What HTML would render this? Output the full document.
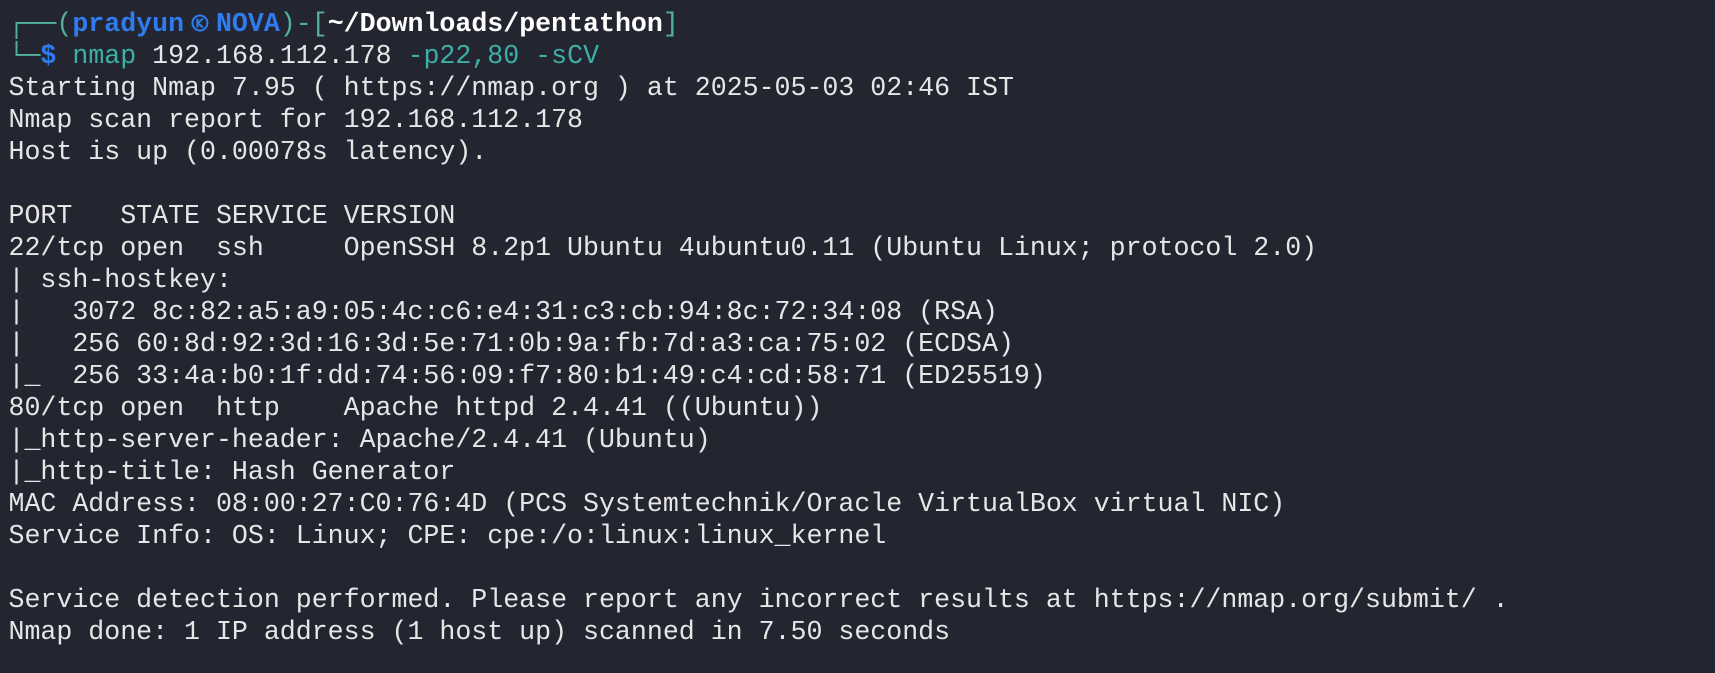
<!DOCTYPE html>
<html><head><meta charset="utf-8"><style>
html,body{margin:0;padding:0;background:#232530;width:1715px;height:673px;overflow:hidden}
pre{margin:0;position:absolute;left:8.5px;top:8px;font-family:"Liberation Mono","DejaVu Sans Mono",monospace;font-size:26.6px;line-height:32px;color:#e6e6e6}
.t{color:#4fb39c}.b{color:#2f7cf0;font-weight:bold}.w{color:#fff;font-weight:bold}.c{color:#3db0a6}
.k{display:inline-block;width:31.9px;height:22px;vertical-align:-3px}
</style></head><body>
<pre><span class="t">┌──(</span><span class="b">pradyun</span><svg class="k" viewBox="0 0 32 22"><circle cx="16" cy="11" r="7.5" fill="none" stroke="#2f7cf0" stroke-width="2"/><path d="M13.5 6.5V15.5M19 6.5L14 11L19 15.5" fill="none" stroke="#2f7cf0" stroke-width="2"/></svg><span class="b">NOVA</span><span class="t">)-[</span><span class="w">~/Downloads/pentathon</span><span class="t">]</span>
<span class="t">└─</span><span class="b">$</span> <span class="c">nmap</span> 192.168.112.178 <span class="c">-p22,80 -sCV</span>
Starting Nmap 7.95 ( https://nmap.org ) at 2025-05-03 02:46 IST
Nmap scan report for 192.168.112.178
Host is up (0.00078s latency).

PORT   STATE SERVICE VERSION
22/tcp open  ssh     OpenSSH 8.2p1 Ubuntu 4ubuntu0.11 (Ubuntu Linux; protocol 2.0)
| ssh-hostkey: 
|   3072 8c:82:a5:a9:05:4c:c6:e4:31:c3:cb:94:8c:72:34:08 (RSA)
|   256 60:8d:92:3d:16:3d:5e:71:0b:9a:fb:7d:a3:ca:75:02 (ECDSA)
|_  256 33:4a:b0:1f:dd:74:56:09:f7:80:b1:49:c4:cd:58:71 (ED25519)
80/tcp open  http    Apache httpd 2.4.41 ((Ubuntu))
|_http-server-header: Apache/2.4.41 (Ubuntu)
|_http-title: Hash Generator
MAC Address: 08:00:27:C0:76:4D (PCS Systemtechnik/Oracle VirtualBox virtual NIC)
Service Info: OS: Linux; CPE: cpe:/o:linux:linux_kernel

Service detection performed. Please report any incorrect results at https://nmap.org/submit/ .
Nmap done: 1 IP address (1 host up) scanned in 7.50 seconds</pre></body></html>
